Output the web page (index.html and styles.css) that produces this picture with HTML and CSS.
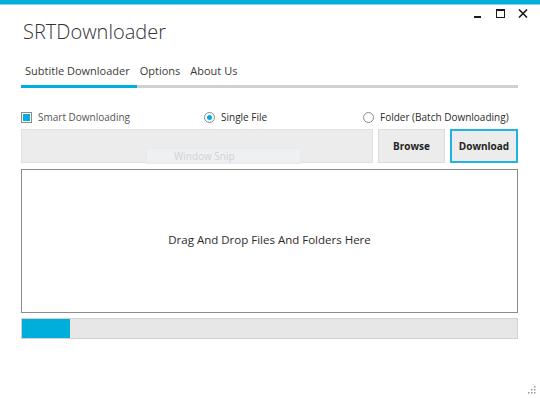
FILE: index.html
```html
<!DOCTYPE html>
<html lang="en">
<head>
    <meta charset="UTF-8">
    <title>SRTDownloader</title>
    <link rel="stylesheet" href="styles.css">
</head>
<body>
    <div class="window">
        <div class="accent"></div>

        <!-- window buttons -->
        <div class="controls">
            <span class="ctl ctl-min"></span>
            <span class="ctl ctl-max"></span>
            <svg class="ctl-close" width="10" height="9" viewBox="0 0 10 9">
                <path d="M1 0.5 L9 8.5 M9 0.5 L1 8.5" stroke="#1a1a1a" stroke-width="1.6" fill="none"/>
            </svg>
        </div>

        <div class="content">
            <h1 class="app-title">SRTDownloader</h1>

            <nav class="tabs">
                <span class="tab active">Subtitle Downloader</span>
                <span class="tab">Options</span>
                <span class="tab">About Us</span>
            </nav>
            <div class="tab-line"><span class="tab-line-active"></span></div>

            <div class="mode-row">
                <label class="check">
                    <span class="check-box"><span class="check-fill"></span></span>
                    Smart Downloading
                </label>
                <label class="radio radio-single">
                    <span class="radio-dot checked"></span>
                    Single File
                </label>
                <label class="radio">
                    <span class="radio-dot"></span>
                    Folder (Batch Downloading)
                </label>
            </div>

            <div class="path-row">
                <div class="path-box">
                    <div class="snip-ghost">Window Snip</div>
                </div>
                <button class="btn">Browse</button>
                <button class="btn btn-primary">Download</button>
            </div>

            <div class="drop-zone">Drag And Drop Files And Folders Here</div>

            <div class="progress">
                <div class="progress-fill"></div>
            </div>
        </div>

        <div class="grip">
            <svg width="9" height="9" viewBox="0 0 9 9">
                <g fill="#9a9a9a">
                    <rect x="7" y="1" width="1.5" height="1.5"/>
                    <rect x="4" y="4" width="1.5" height="1.5"/>
                    <rect x="7" y="4" width="1.5" height="1.5"/>
                    <rect x="1" y="7" width="1.5" height="1.5"/>
                    <rect x="4" y="7" width="1.5" height="1.5"/>
                    <rect x="7" y="7" width="1.5" height="1.5"/>
                </g>
            </svg>
        </div>
    </div>
</body>
</html>
```

FILE: styles.css
```css
/* --- reset --- */
* {
    box-sizing: border-box;
    margin: 0;
    padding: 0;
}

body {
    font-family: 'Open Sans', 'Noto Sans', sans-serif;
    background: #ffffff;
    color: #2b2b2b;
    width: 540px;
    height: 398px;
    overflow: hidden;
}

.window {
    height: 398px;
    display: flex;
    flex-direction: column;
}

/* --- top accent strip --- */
.accent {
    height: 5px;
    background: #00aedb;
    border-bottom: 1px solid #7fd4ee;
}

/* --- min / max / close --- */
.controls {
    display: flex;
    justify-content: flex-end;
    align-items: flex-end;
    gap: 13px;
    padding: 5px 12px 0 0;
    height: 13px;
}

.ctl-min {
    width: 7px;
    height: 2px;
    background: #1a1a1a;
    margin-right: 2px;
}

.ctl-max {
    width: 9px;
    height: 9px;
    border: 1.5px solid #1a1a1a;
    border-top-width: 2px;
}

/* --- main area --- */
.content {
    padding: 0 22px 0 21px;
}

.app-title {
    font-weight: 300;
    font-size: 20px;
    color: #333333;
    margin: 0 0 0 2px;
    line-height: 28px;
}

.tabs {
    display: flex;
    gap: 10px;
    margin: 17px 0 0 4px;
    font-size: 11px;
    color: #3a3a3a;
    line-height: 16px;
}

.tab-line {
    height: 3px;
    background: #d0d0d0;
    margin-top: 6px;
}

.tab-line-active {
    display: block;
    width: 116px;
    height: 3px;
    background: #00aedb;
}

/* --- checkbox / radio row --- */
.mode-row {
    display: flex;
    align-items: center;
    margin-top: 21px;
    height: 16px;
    font-size: 10px;
    white-space: nowrap;
}

.check {
    display: flex;
    align-items: center;
    gap: 6px;
    color: #555555;
    width: 183px;
}

.check-box {
    width: 11px;
    height: 11px;
    border: 1px solid #8a8a8a;
    padding: 1px;
    display: flex;
}

.check-fill {
    flex: 1;
    background: #00aedb;
}

.radio {
    display: flex;
    align-items: center;
    gap: 6px;
    color: #2b2b2b;
}

.radio-single {
    width: 159px;
}

.radio-dot {
    width: 11px;
    height: 11px;
    border-radius: 50%;
    border: 1px solid #8a8a8a;
    display: flex;
    align-items: center;
    justify-content: center;
}

.radio-dot.checked::after {
    content: "";
    width: 5px;
    height: 5px;
    border-radius: 50%;
    background: #00aedb;
}

/* --- path + buttons --- */
.path-row {
    display: flex;
    gap: 5px;
    margin-top: 4px;
    height: 34px;
}

.path-box {
    flex: 1;
    background: #ececec;
    border: 1px solid #e0e0e0;
    position: relative;
}

/* faded capture-tool label left in the shot */
.snip-ghost {
    position: absolute;
    left: 124px;
    top: 18px;
    width: 155px;
    height: 16px;
    background: rgba(240, 243, 247, 0.6);
    border: 1px solid rgba(225, 232, 240, 0.7);
    color: #d2d2d2;
    font-size: 10px;
    line-height: 14px;
    padding-left: 27px;
}

.btn {
    width: 67px;
    background: #ececec;
    border: 1px solid #dcdcdc;
    font-family: 'Open Sans', 'Noto Sans', sans-serif;
    font-size: 10px;
    font-weight: 700;
    color: #1f1f1f;
}

.btn-primary {
    width: 68px;
    border: 2px solid #1fb4e0;
}

/* --- drop zone --- */
.drop-zone {
    margin-top: 6px;
    height: 144px;
    border: 1px solid #8c8c8c;
    display: flex;
    align-items: center;
    justify-content: center;
    font-size: 11.5px;
    color: #2b2b2b;
    padding-bottom: 4px;
}

/* --- progress --- */
.progress {
    margin-top: 5px;
    height: 21px;
    background: #e7e7e7;
    border: 1px solid #d2d2d2;
    display: flex;
}

.progress-fill {
    width: 48px;
    background: #00aedb;
}

/* --- resize grip --- */
.grip {
    margin-top: auto;
    display: flex;
    justify-content: flex-end;
    padding: 0 4px 4px 0;
}
```
